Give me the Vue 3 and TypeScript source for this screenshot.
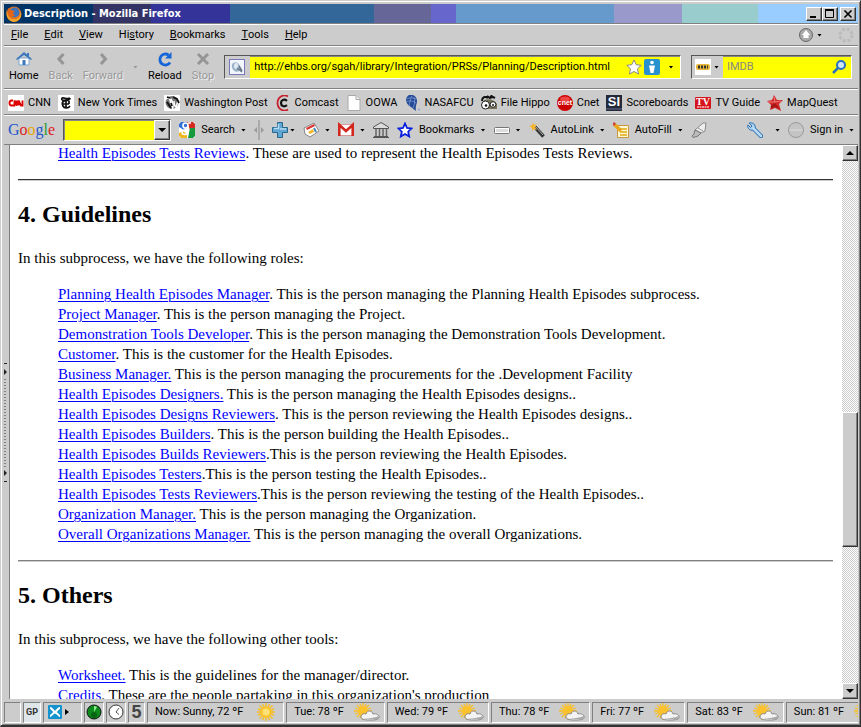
<script setup lang="ts">
interface Role { link: string; rest: string }
interface Bookmark { label: string; icon: string }
interface Forecast { text: string; kind: 'sun' | 'cloud' }

const menus: [string, string, string][] = [
  ['', 'F', 'ile'], ['', 'E', 'dit'], ['', 'V', 'iew'], ['Hi', 's', 'tory'],
  ['', 'B', 'ookmarks'], ['', 'T', 'ools'], ['', 'H', 'elp'],
]

const bookmarks: Bookmark[] = [
  { label: 'CNN', icon: '<rect width="16" height="16" fill="#fff"/><path d="M5 5.500H3.500Q1.500 5.500 1.500 8t2 2.500H6.500V5.500l2.500 5V5.500M10.500 10.500v-5l2.500 5h1.500v-5" fill="none" stroke="#d00" stroke-width="1.900"/>' },
  { label: 'New York Times', icon: '<rect width="16" height="16" fill="#fff"/><path d="M4 3c2-1 5 2 8 0M4 3c-1 2 1 3 3 2M12 3c0 3-4 2-6 3s-2 3-1 5 5 3 7 0M8 4v9M5 9h6M11 6v3" fill="none" stroke="#111" stroke-width="1.700"/>' },
  { label: 'Washington Post', icon: '<rect width="16" height="16" fill="#fff"/><circle cx="8" cy="7.500" r="6.500" fill="#777"/><path d="M1 5c2-3 4-3 5 0s1 5 3 9M7 4c2 3 2 6 2 9M10 6c0 3 0 5 2 6l2-6" fill="none" stroke="#fff" stroke-width="1.500"/><path d="M9 2l4 2 2 4M3 2l3 1M3 7l4 6M7 8l1 3" fill="none" stroke="#111" stroke-width="1.800"/>' },
  { label: 'Comcast', icon: '<path d="M13 1.500A7 7.500 0 1 0 13 14.500" fill="none" stroke="#c8202c" stroke-width="1.800"/><path d="M12 5.800C9 3.500 6 5 6 8s3 4.500 6 2.200" fill="none" stroke="#111" stroke-width="2.200"/>' },
  { label: 'OOWA', icon: '<path d="M2 .5h8l4 4v11H2z" fill="#fff" stroke="#aaa"/><path d="M10 .5v4h4" fill="#eee" stroke="#aaa"/>' },
  { label: 'NASAFCU', icon: '<path d="M5 0c5-1 8 2 8 6s-2 4-1 10L7 12C2 10 0 3 5 0z" fill="#234a94"/><path d="M3 4c3-2 6-1 9 0M2 7c4-2 7-1 10 1M5 11c1-4 1-6 3-10M9 13c2-4 2-8 1-11" fill="none" stroke="#7f9bd4" stroke-width=".8"/><circle cx="15" cy="14.500" r="1" fill="#8aa8e0"/>' },
  { label: 'File Hippo', icon: '<path d="M1 6c0-4 3-5 6-3M6 1l3 2 2-3M8 3l4-1 2 1" fill="none" stroke="#111" stroke-width="2"/><path d="M2 6c4-3 11-2 14 3v5H2z" fill="#77745a"/><circle cx="4.500" cy="10" r="4" fill="#fff" stroke="#222"/><circle cx="12" cy="9.500" r="2.800" fill="#fff" stroke="#222"/><circle cx="5" cy="10.500" r="1.300" fill="#111"/><circle cx="12" cy="10" r="1" fill="#111"/>' },
  { label: 'Cnet', icon: '<circle cx="8" cy="8" r="8" fill="#c00"/><ellipse cx="8" cy="4" rx="5" ry="2.500" fill="#e44"/><text x="8" y="10" text-anchor="middle" font-family="Liberation Sans" font-size="7" font-weight="bold" fill="#fff">cnet</text>' },
  { label: 'Scoreboards', icon: '<rect width="16" height="16" fill="#23283a"/><text x="8" y="11" text-anchor="middle" font-family="Liberation Sans" font-size="13" font-weight="bold" fill="#fff">SI</text><path d="M0 14h16" stroke="#65708c"/>' },
  { label: 'TV Guide', icon: '<rect y="2" width="16" height="12" rx="1" fill="#d4141c"/><text x="8" y="10" text-anchor="middle" font-family="Liberation Serif" font-size="10" font-weight="bold" fill="#fff">TV</text><path d="M2 12h12" stroke="#fbb" stroke-width="1.500" stroke-dasharray="2 .5"/>' },
  { label: 'MapQuest', icon: '<path d="M7 0l3 5 6 0-4 4 2 7-6-3-5 2 1-5-4-4 5-1z" fill="#d32b2b"/><path d="M7 2l1 5-7 0M8 7l6-1" fill="none" stroke="#f07a7a"/><path d="M4 10l4-2 5 6-5-2-4 2z" fill="#a81818"/>' },
]

const roles: Role[] = [
  { link: 'Planning Health Episodes Manager', rest: '. This is the person managing the Planning Health Episodes subprocess.' },
  { link: 'Project Manager', rest: '. This is the person managing the Project.' },
  { link: 'Demonstration Tools Developer', rest: '. This is the person managing the Demonstration Tools Development.' },
  { link: 'Customer', rest: '. This is the customer for the Health Episodes.' },
  { link: 'Business Manager.', rest: ' This is the person managing the procurements for the .Development Facility' },
  { link: 'Health Episodes Designers.', rest: ' This is the person managing the Health Episodes designs..' },
  { link: 'Health Episodes Designs Reviewers', rest: '. This is the person reviewing the Health Episodes designs..' },
  { link: 'Health Episodes Builders', rest: '. This is the person building the Health Episodes..' },
  { link: 'Health Episodes Builds Reviewers', rest: '.This is the person reviewing the Health Episodes.' },
  { link: 'Health Episodes Testers', rest: '.This is the person testing the Health Episodes..' },
  { link: 'Health Episodes Tests Reviewers', rest: '.This is the person reviewing the testing of the Health Episodes..' },
  { link: 'Organization Manager.', rest: ' This is the person managing the Organization.' },
  { link: 'Overall Organizations Manager.', rest: ' This is the person managing the overall Organizations.' },
]

const tools: Role[] = [
  { link: 'Worksheet.', rest: ' This is the guidelines for the manager/director.' },
  { link: 'Credits', rest: '. These are the people partaking in this organization\'s production' },
]

const forecasts: Forecast[] = [
  { text: 'Now: Sunny, 72 ºF', kind: 'sun' },
  { text: 'Tue: 78 ºF', kind: 'cloud' },
  { text: 'Wed: 79 ºF', kind: 'cloud' },
  { text: 'Thu: 78 ºF', kind: 'cloud' },
  { text: 'Fri: 77 ºF', kind: 'cloud' },
  { text: 'Sat: 83 ºF', kind: 'cloud' },
  { text: 'Sun: 81 ºF', kind: 'cloud' },
]
</script>

<template>
  <div class="window">
    <header class="title-bar">
      <svg class="i16" viewBox="0 0 16 16">
        <circle cx="8" cy="8" r="7.500" fill="#e8751a" />
        <circle cx="8.500" cy="6.500" r="5" fill="#3a74bd" />
        <path d="M1 3c0 9 4 11 9 10 4-1 5-5 4-8 3 6-1 11-6 11S-1 11 1 3z" fill="#f6a52a" />
        <path d="M2 2l3 2 4 1-2 2 2 3-4 1C2 9 1 6 2 2z" fill="#e2651a" />
      </svg>
      <h1>Description - Mozilla Firefox</h1>
      <div class="window-buttons">
        <button class="raised" aria-label="Minimize"><svg viewBox="0 0 12 10"><path d="M2 8h6" stroke="#000" stroke-width="2" /></svg></button>
        <button class="raised" aria-label="Maximize"><svg viewBox="0 0 12 10"><path d="M1.500 1.500h8v7h-8z" fill="none" stroke="#000" /><path d="M1 1h9" stroke="#000" stroke-width="2" /></svg></button>
        <button class="raised close" aria-label="Close"><svg viewBox="0 0 12 10"><path d="M2.500 1.500l7 7M9.500 1.500l-7 7" stroke="#000" stroke-width="1.600" /></svg></button>
      </div>
    </header>

    <nav class="bar menu-bar">
      <button v-for="m in menus" :key="m[1]">{{ m[0] }}<u>{{ m[1] }}</u>{{ m[2] }}</button>
      <span class="spacer"></span>
      <button class="dropper" aria-label="Updates">
        <svg class="i16" viewBox="0 0 16 16"><circle cx="8" cy="8" r="6.500" fill="#aaa" stroke="#666" /><path d="M8 3l4 5h-1.500v3h-5V8H4z" fill="#fff" /></svg>
        <i class="caret"></i>
      </button>
      <svg class="i16" viewBox="0 0 16 16"><circle cx="8" cy="8" r="6" fill="none" stroke="#bbb" stroke-width="3" stroke-dasharray="3 1.700" /></svg>
    </nav>

    <div class="bar nav-bar">
      <button class="nav-button">
        <svg class="i16" viewBox="0 0 16 16"><path d="M3 7h10v7H3z" fill="#fff" stroke="#7aa5cf" /><path d="M0 8l8-7 3 2.500V2h2v3.500L16 8l-1 1-7-5-7 5z" fill="#3b78bd" /><path d="M6.500 9h3v5h-3z" fill="#3b78bd" /></svg>
        Home
      </button>
      <button class="nav-button" disabled>
        <svg class="i16" viewBox="0 0 16 16"><path d="M10.500 3L6 8l4.500 5" fill="none" stroke="#959595" stroke-width="3" /></svg>
        Back
      </button>
      <button class="nav-button" disabled>
        <svg class="i16" viewBox="0 0 16 16"><path d="M6 3l4.500 5L6 13" fill="none" stroke="#959595" stroke-width="3" /></svg>
        Forward
      </button>
      <i class="caret faint"></i>
      <button class="nav-button">
        <svg class="i16" viewBox="0 0 16 16"><path d="M13 11.500A5.500 5.500 0 1 1 11.500 4" fill="none" stroke="#1565d8" stroke-width="2.800" /><path d="M14.500 1v6.500H8z" fill="#1565d8" /></svg>
        Reload
      </button>
      <button class="nav-button" disabled>
        <svg class="i16" viewBox="0 0 16 16"><path d="M3 3l10 10M13 3L3 13" stroke="#959595" stroke-width="3" /></svg>
        Stop
      </button>
      <div class="field url-field">
        <span class="site-icon">
          <svg class="i16" viewBox="0 0 16 16"><rect x=".5" y=".5" width="15" height="15" fill="#f3f6fa" stroke="#77b" /><ellipse cx="7" cy="8" rx="4" ry="5" fill="#9ab4cc" transform="rotate(-30 7 8)" /><ellipse cx="7" cy="7" rx="2" ry="3" fill="#dfe9f2" /><path d="M8 9l5 4M10 7l3 5" stroke="#678" stroke-width="1.500" /></svg>
        </span>
        <input type="text" aria-label="Address" value="http://ehbs.org/sgah/library/Integration/PRSs/Planning/Description.html">
        <svg class="i16" viewBox="0 0 16 16"><path d="M8 1l2.200 4.700 5 .6-3.700 3.500 1 5.200L8 12.500 3.500 15l1-5.200L.8 6.300l5-.6z" fill="#fff" stroke="#888" /></svg>
        <svg class="i16" viewBox="0 0 16 16"><rect width="16" height="16" rx="2" fill="#2a91cf" /><circle cx="8" cy="3.500" r="1.800" fill="#fff" /><path d="M5 6.500h6L9.500 14h-3z" fill="#fff" /></svg>
        <button class="arrow-button" aria-label="Show history"><i class="caret"></i></button>
      </div>
      <div class="field search-field">
        <button class="engine" aria-label="Search engine">
          <svg class="i16" viewBox="0 0 16 16"><rect width="16" height="16" fill="#fff" /><rect x="1" y="5" width="14" height="6" rx="2" fill="#e7b83a" /><path d="M3 8h10" stroke="#333" stroke-width="3" stroke-dasharray="2 1" /></svg>
          <i class="caret"></i>
        </button>
        <input type="text" aria-label="Search" placeholder="IMDB">
        <svg class="i16" viewBox="0 0 16 16"><circle cx="10" cy="6" r="4" fill="#cfe6fa" stroke="#2a6fc0" stroke-width="2" /><path d="M7 9l-5 5" stroke="#2a6fc0" stroke-width="2.500" /></svg>
      </div>
    </div>

    <nav class="bar bookmark-bar">
      <a v-for="b in bookmarks" :key="b.label" href="#">
        <svg class="i16" viewBox="0 0 16 16" v-html="b.icon"></svg>{{ b.label }}
      </a>
    </nav>

    <div class="bar google-bar">
      <span class="google"><b class="blue">G</b><b class="red">o</b><b class="gold">o</b><b class="blue">g</b><b class="green">l</b><b class="red">e</b></span>
      <div class="field combo">
        <input type="text" aria-label="Google search">
        <button class="raised" aria-label="Show searches"><i class="caret big"></i></button>
      </div>
      <button class="tool">
        <svg class="i16" viewBox="0 0 16 16"><rect width="16" height="16" rx="2" fill="#fff" /><path d="M0 2l2-2h6v7L5 8 0 5z" fill="#2f6fd6" /><path d="M8 0h6l2 2v6h-5z" fill="#d62a20" /><path d="M11 6h5v8l-2 2H9z" fill="#159a3c" /><path d="M0 11l4-2 4 3v4H2l-2-2z" fill="#f0b41c" /><path d="M4 3.500a2.300 2.300 0 1 0 5 0a2.300 2.300 0 1 0-5 0M7 6c-2 2 3 3 2 5s-6 2-6-.5S6 8 8 8M9 1h3" fill="none" stroke="#fff" stroke-width="1.700" /></svg>
        Search<i class="caret"></i>
      </button>
      <svg class="splitter" viewBox="0 0 10 20"><path d="M5 0v20" stroke="#888" /><path d="M3 7v6L0 10zM7 7v6l3-3z" fill="#999" /></svg>
      <button class="tool tight" aria-label="Add gadget">
        <svg class="i16" viewBox="0 0 16 16"><path d="M5.500.5h5v5h5v5h-5v5h-5v-5h-5v-5h5z" fill="#5fa6d3" stroke="#28688f" /><path d="M6.500 2v4.500H2M8 7h6" fill="none" stroke="#b5dcf2" stroke-width="1.500" /></svg>
        <i class="caret"></i>
      </button>
      <button class="tool" aria-label="News">
        <svg class="i16" viewBox="0 0 16 16"><path d="M1 6l10-5 5 8-9 6-5-3z" fill="#fff" stroke="#888" /><path d="M3 6l8-4 1 2-8 4z" fill="#d33" /><path d="M5 10l5-3 1 3-4 2z" fill="#f0b82a" /><path d="M11 6l2 4" stroke="#48b" stroke-width="2" /></svg>
        <i class="caret"></i>
      </button>
      <button class="tool" aria-label="Gmail">
        <svg class="i16" viewBox="0 0 16 16"><path d="M0 2.500h16v11H0z" fill="#fff" stroke="#d99" /><path d="M1.300 14V3L8 9l6.700-6v11" fill="none" stroke="#d3261d" stroke-width="2.600" /></svg>
        <i class="caret"></i>
      </button>
      <button class="tool" aria-label="Institution">
        <svg class="i16" viewBox="0 0 16 16"><path d="M.5 5L8 .5 15.500 5v1.500H.5zM1 14.500h14M0 15.500h16" fill="#ddd" stroke="#555" /><path d="M3 7v7M6.500 7v7M10 7v7M13.500 7v7" stroke="#666" stroke-width="1.500" /></svg>
      </button>
      <button class="tool">
        <svg class="i16" viewBox="0 0 16 16"><path d="M8 1.500l2 4.500 4.500.5-3.300 3.200 1 4.800L8 12l-4.200 2.500 1-4.800L1.500 6.500 6 6z" fill="#fff" stroke="#0a1ee0" stroke-width="1.800" /></svg>
        Bookmarks<i class="caret"></i>
      </button>
      <button class="tool" aria-label="PageRank">
        <svg class="i16" viewBox="0 0 16 16"><rect x=".5" y="5.500" width="15" height="6" rx="1" fill="#fff" stroke="#777" /><path d="M2 8.500h12" stroke="#ddd" stroke-width="3" /></svg>
        <i class="caret"></i>
      </button>
      <button class="tool">
        <svg class="i16" viewBox="0 0 16 16"><path d="M6 5l8.500 9.500" stroke="#333" stroke-width="3.500" /><path d="M6 4l8 9" stroke="#aaa" /><path d="M4 0l1 3 3-1-2 3 2 3-3-1-2 2V6L0 4l3-.5z" fill="#f5b42a" /></svg>
        AutoLink<i class="caret"></i>
      </button>
      <button class="tool">
        <svg class="i16" viewBox="0 0 16 16"><path d="M4.500 3.500h11v12h-11z" fill="#fff8d8" stroke="#c9973a" /><path d="M7 7h7M7 10h7M7 13h7" stroke="#e5c03c" stroke-width="2" /><path d="M1 2l7 7" stroke="#e8a71c" stroke-width="3.500" /><path d="M0 1l2 2" stroke="#c44" stroke-width="3" /></svg>
        AutoFill<i class="caret"></i>
      </button>
      <button class="tool" aria-label="Highlight">
        <svg class="i16" viewBox="0 0 16 16"><path d="M4 8l8-7 3 0-1 8-4 2z" fill="#eee" stroke="#888" /><path d="M4 8l6 3-3 3-5 1.500L1 14l2-2z" fill="#bbb" stroke="#777" /><path d="M7 6l5 3" stroke="#999" /></svg>
      </button>
      <span class="spacer"></span>
      <button class="tool wrench" aria-label="Settings">
        <svg class="i16" viewBox="0 0 16 16"><path d="M6 6l8 8" stroke="#2e6fae" stroke-width="4.500" stroke-linecap="round" /><path d="M2 1l3 3-1.500 1.500L.8 3C0 7 4 9 6 8l2-2c1-3-2-6-6-5z" fill="#a9d2f3" stroke="#2e6fae" /><path d="M6 6l8 8" stroke="#b7daf6" stroke-width="2.500" stroke-linecap="round" /></svg>
        <i class="caret"></i>
      </button>
      <button class="tool">
        <svg class="i16" viewBox="0 0 16 16"><circle cx="8" cy="8" r="7.500" fill="#c4c4c4" stroke="#999" /><path d="M1 8h14" stroke="#ddd" /></svg>
        Sign in<i class="caret"></i>
      </button>
    </div>

    <div class="viewport">
      <div class="side-grip">
        <svg viewBox="0 0 5 119"><path d="M0 .5h3M0 118.500h3" stroke="#222" /><path d="M0 6v6l3-3zM0 107v6l3-3z" fill="#222" /><path d="M1 16v88" stroke="#333" stroke-dasharray="1 2" /></svg>
      </div>
      <main>
        <article>
          <p class="entries"><a href="#">Health Episodes Tests Reviews</a>. These are used to represent the Health Episodes Tests Reviews.</p>
          <hr class="dark">
          <h2>4. Guidelines</h2>
          <p>In this subprocess, we have the following roles:</p>
          <ul class="entries">
            <li v-for="r in roles" :key="r.link"><a href="#">{{ r.link }}</a>{{ r.rest }}</li>
          </ul>
          <hr>
          <h2>5. Others</h2>
          <p>In this subprocess, we have the following other tools:</p>
          <ul class="entries">
            <li v-for="t in tools" :key="t.link"><a href="#">{{ t.link }}</a>{{ t.rest }}</li>
          </ul>
        </article>
      </main>
      <div class="scrollbar">
        <button class="raised" aria-label="Scroll up"><i class="caret big up"></i></button>
        <div class="track">
          <span class="before"></span>
          <span class="thumb raised"></span>
          <span class="after"></span>
        </div>
        <button class="raised" aria-label="Scroll down"><i class="caret big"></i></button>
      </div>
    </div>

    <footer class="status-bar">
      <span class="panel"></span>
      <span class="panel gp">GP</span>
      <span class="panel wide">
        <svg class="i14" viewBox="0 0 14 14"><rect width="14" height="14" rx="1" fill="#1593cf" /><path d="M2 3c2 0 3 3 5 4s4 4 5 4M12 3c-2 0-3 3-5 4s-4 4-5 4" fill="none" stroke="#fff" stroke-width="2" /></svg>
        <svg class="play" viewBox="0 0 4 6"><path d="M0 0v6l4-3z" /></svg>
      </span>
      <span class="panel round">
        <svg class="i16" viewBox="0 0 16 16"><circle cx="8" cy="8" r="7" fill="#0d8c1d" stroke="#111" /><path d="M8 8V2a6 6 0 0 1 3 1z" fill="#8df08a" /><circle cx="8" cy="11" r="3" fill="#086312" /></svg>
      </span>
      <span class="panel round">
        <svg class="i16" viewBox="0 0 16 16"><circle cx="8" cy="8" r="7" fill="#fff" stroke="#333" /><path d="M11 4L8 8l3 2.500" fill="none" stroke="#555" /></svg>
      </span>
      <span class="panel five">5</span>
      <span v-for="f in forecasts" :key="f.text" class="panel forecast" :class="f.kind">
        {{ f.text }}
        <svg v-if="f.kind === 'sun'" class="sky" viewBox="0 0 26 18"><path d="M13 0v18M4 9h18M6.500 2.500l13 13M19.500 2.500l-13 13M9.500 1l7 16M16.500 1l-7 16M5 6l16 6M21 6L5 12" stroke="#f7bd22" stroke-width="1.400" /><circle cx="13" cy="9" r="5.500" fill="#fbc427" /><circle cx="13" cy="9" r="3.500" fill="#fde27a" /></svg>
        <svg v-else class="sky" viewBox="0 0 26 18"><path d="M9 0v17M0 8h18M3 2l12 12M15 2L3 14M6 1l6 14M12 1L6 15M1 5l16 6M17 5L1 11" stroke="#f7bd22" stroke-width="1.300" /><circle cx="9" cy="8" r="5" fill="#fcc22e" /><path d="M7 14c0-3 3-4 5-3 1-4 6-4 7 0 3-1 7 1 6 4-1 2-6 2-9 2s-9 0-9-3z" fill="#f3f3f3" stroke="#888" /><path d="M9 16h15c1-1 1-2 0-3-3 2-9 2-15 3z" fill="#aaa" /></svg>
      </span>
    </footer>
  </div>
</template>

<style>
body { background: #ccc; }
</style>

<style scoped>
* { box-sizing: border-box; }
.window {
  height: 100vh;
  display: flex;
  flex-direction: column;
  padding: 2px 2px 1px 2px;
  overflow: hidden;
  background: #ccc;
  color: #000;
  font: 11px/16px Roboto, sans-serif;
  border: 1px solid #ccc;
  border-right: 1px solid #333;
  border-bottom: 2px solid #333;
  box-shadow: inset 1px 1px #fff, inset -1px -1px #808080;
  white-space: nowrap;
}
button, input { font: inherit; color: inherit; border: 0; padding: 0; margin: 0; background: none; border-radius: 0; }
button { display: flex; align-items: center; white-space: nowrap; }
a { color: inherit; text-decoration: none; }
.i16 { width: 16px; height: 16px; flex: none; }
.i14 { width: 14px; height: 14px; flex: none; }
.spacer { flex: 1; }
.caret { flex: none; width: 5px; height: 3px; background: #000; clip-path: polygon(0 0, 100% 0, 50% 100%); }
.caret.big { width: 8px; height: 4px; }
.caret.up { transform: rotate(180deg); }
.caret.faint { background: #999; }
.raised { background: #ccc; border: 1px solid; border-color: #fff #333 #333 #fff; box-shadow: inset -1px -1px #808080; justify-content: center; }

.title-bar {
  flex: none;
  height: 19px;
  display: flex;
  align-items: center;
  gap: 2px;
  margin: 1px 0 0 1px;
  padding: 0 2px;
  background: linear-gradient(90deg, #036 10.4%, #336 0 17.2%, #339 0 26.5%, #369 0 43.3%, #669 0 50%, #66c 0 52.9%, #69c 0 71.4%, #99c 0 79.4%, #9cc 0 88.3%, #9cf 0);
}
.title-bar h1 { flex: 1; margin: 0; font: bold 11px/18px "DejaVu Sans Condensed", sans-serif; color: #fff; }
.window-buttons { display: flex; }
.window-buttons button { width: 16px; height: 14px; }
.window-buttons .close { margin-left: 2px; }
.window-buttons svg { width: 12px; height: 10px; }

.bar {
  flex: none;
  display: flex;
  align-items: center;
  margin-left: 1px;
  border-top: 1px solid #808080;
  box-shadow: inset 0 1px #fff;
}
.menu-bar { height: 22px; gap: 16px; padding: 1px 4px 0 7px; }
.menu-bar .dropper { gap: 3px; }
.nav-bar { height: 43px; padding: 0 6px 0 5px; gap: 10px; }
.nav-button { flex-direction: column; gap: 1px; }
.nav-button:disabled { color: #999; text-shadow: 1px 1px #eee; }
.field { display: flex; align-items: center; background: #ff0; border: 1px solid; border-color: #555 #fff #fff #555; box-shadow: inset 1px 1px #888; }
.field input { flex: 1; min-width: 0; outline: 0; }
.url-field { flex: 1; height: 24px; gap: 2px; }
.site-icon { display: flex; align-items: center; background: #ccc; padding: 0 5px 0 4px; align-self: stretch; }
.url-field input { padding-left: 2px; }
.arrow-button { width: 18px; height: 20px; justify-content: center; }
.search-field { width: 161px; height: 24px; padding-right: 4px; }
.engine { align-self: stretch; background: #ccc; gap: 3px; padding: 0 4px 0 3px; margin-right: 4px; }
.search-field input::placeholder { color: #888; opacity: 1; }

.bookmark-bar { height: 26px; padding: 2px 4px 0 4px; gap: 7px; }
.bookmark-bar a { display: flex; align-items: center; gap: 4px; }

.google-bar { height: 30px; padding: 1px 4px 0 4px; gap: 8px; }
.google { font: 16px/24px "Liberation Serif", serif; }
.google b { font-weight: normal; }
.blue { color: #2255cc; }
.red { color: #d22; }
.gold { color: #e8a400; }
.green { color: #2a9a3a; }
.combo { width: 108px; height: 22px; }
.combo .raised { width: 16px; height: 20px; }
.tool { gap: 6px; }
.tool.tight { gap: 2px; }
.tool.wrench { gap: 12px; }
.splitter { width: 10px; height: 20px; flex: none; }

.viewport { flex: 1; min-height: 0; display: flex; margin-left: 1px; border-top: 1px solid #808080; }
.side-grip { flex: none; width: 6px; display: flex; align-items: center; border-right: 1px solid #808080; }
.side-grip svg { width: 5px; height: 119px; }
main { flex: 1; min-width: 0; overflow: hidden; background: #fff; font: 15px/20px "Liberation Serif", "Times New Roman", serif; }
article { margin-top: -2px; padding: 0 9px 0 8px; }
article p { margin: 0; }
article a { color: #00f; text-decoration: underline; text-decoration-thickness: 1px; text-underline-offset: 2px; }
h2 { margin: 19px 0 20px; font-size: 24px; line-height: 28px; }
.entries { margin: 16px 0; padding: 0 0 0 40px; list-style: none; }
article .entries:first-child { margin: 0 0 16px; padding-left: 40px; }
hr { margin: 0; border: 0; height: 2px; background: linear-gradient(#808080 50%, #ccc 50%); }
hr.dark { background: linear-gradient(#333 50%, #ccc 50%); }

.scrollbar { flex: none; width: 16px; display: flex; flex-direction: column; }
.scrollbar button { height: 16px; width: 16px; }
.track { flex: 1; display: flex; flex-direction: column; background: repeating-conic-gradient(#ccc 0 25%, #fff 0 50%) 0 0 / 2px 2px; }
.before { flex: 252; }
.thumb { flex: 133; }
.after { flex: 137; }

.status-bar { flex: none; height: 25px; display: flex; align-items: center; margin-left: 1px; padding-top: 1px; gap: 2px; overflow: hidden; }
.panel { flex: none; display: flex; align-items: center; justify-content: center; height: 21px; min-width: 17px; border: 1px solid; border-color: #808080 #fff #fff #808080; }
.gp { width: 18px; background: #dfe6ea; font-size: 9px; font-weight: bold; color: #333; }
.wide { width: 39px; gap: 3px; justify-content: flex-start; padding-left: 4px; }
.play { width: 4px; height: 6px; }
.round { width: 20px; }
.five { width: 17px; font: bold 18px/18px "Liberation Sans", sans-serif; color: #444; }
.forecast { gap: 10px; padding: 0 4px 0 7px; }
.sky { width: 26px; height: 18px; flex: none; }
</style>
